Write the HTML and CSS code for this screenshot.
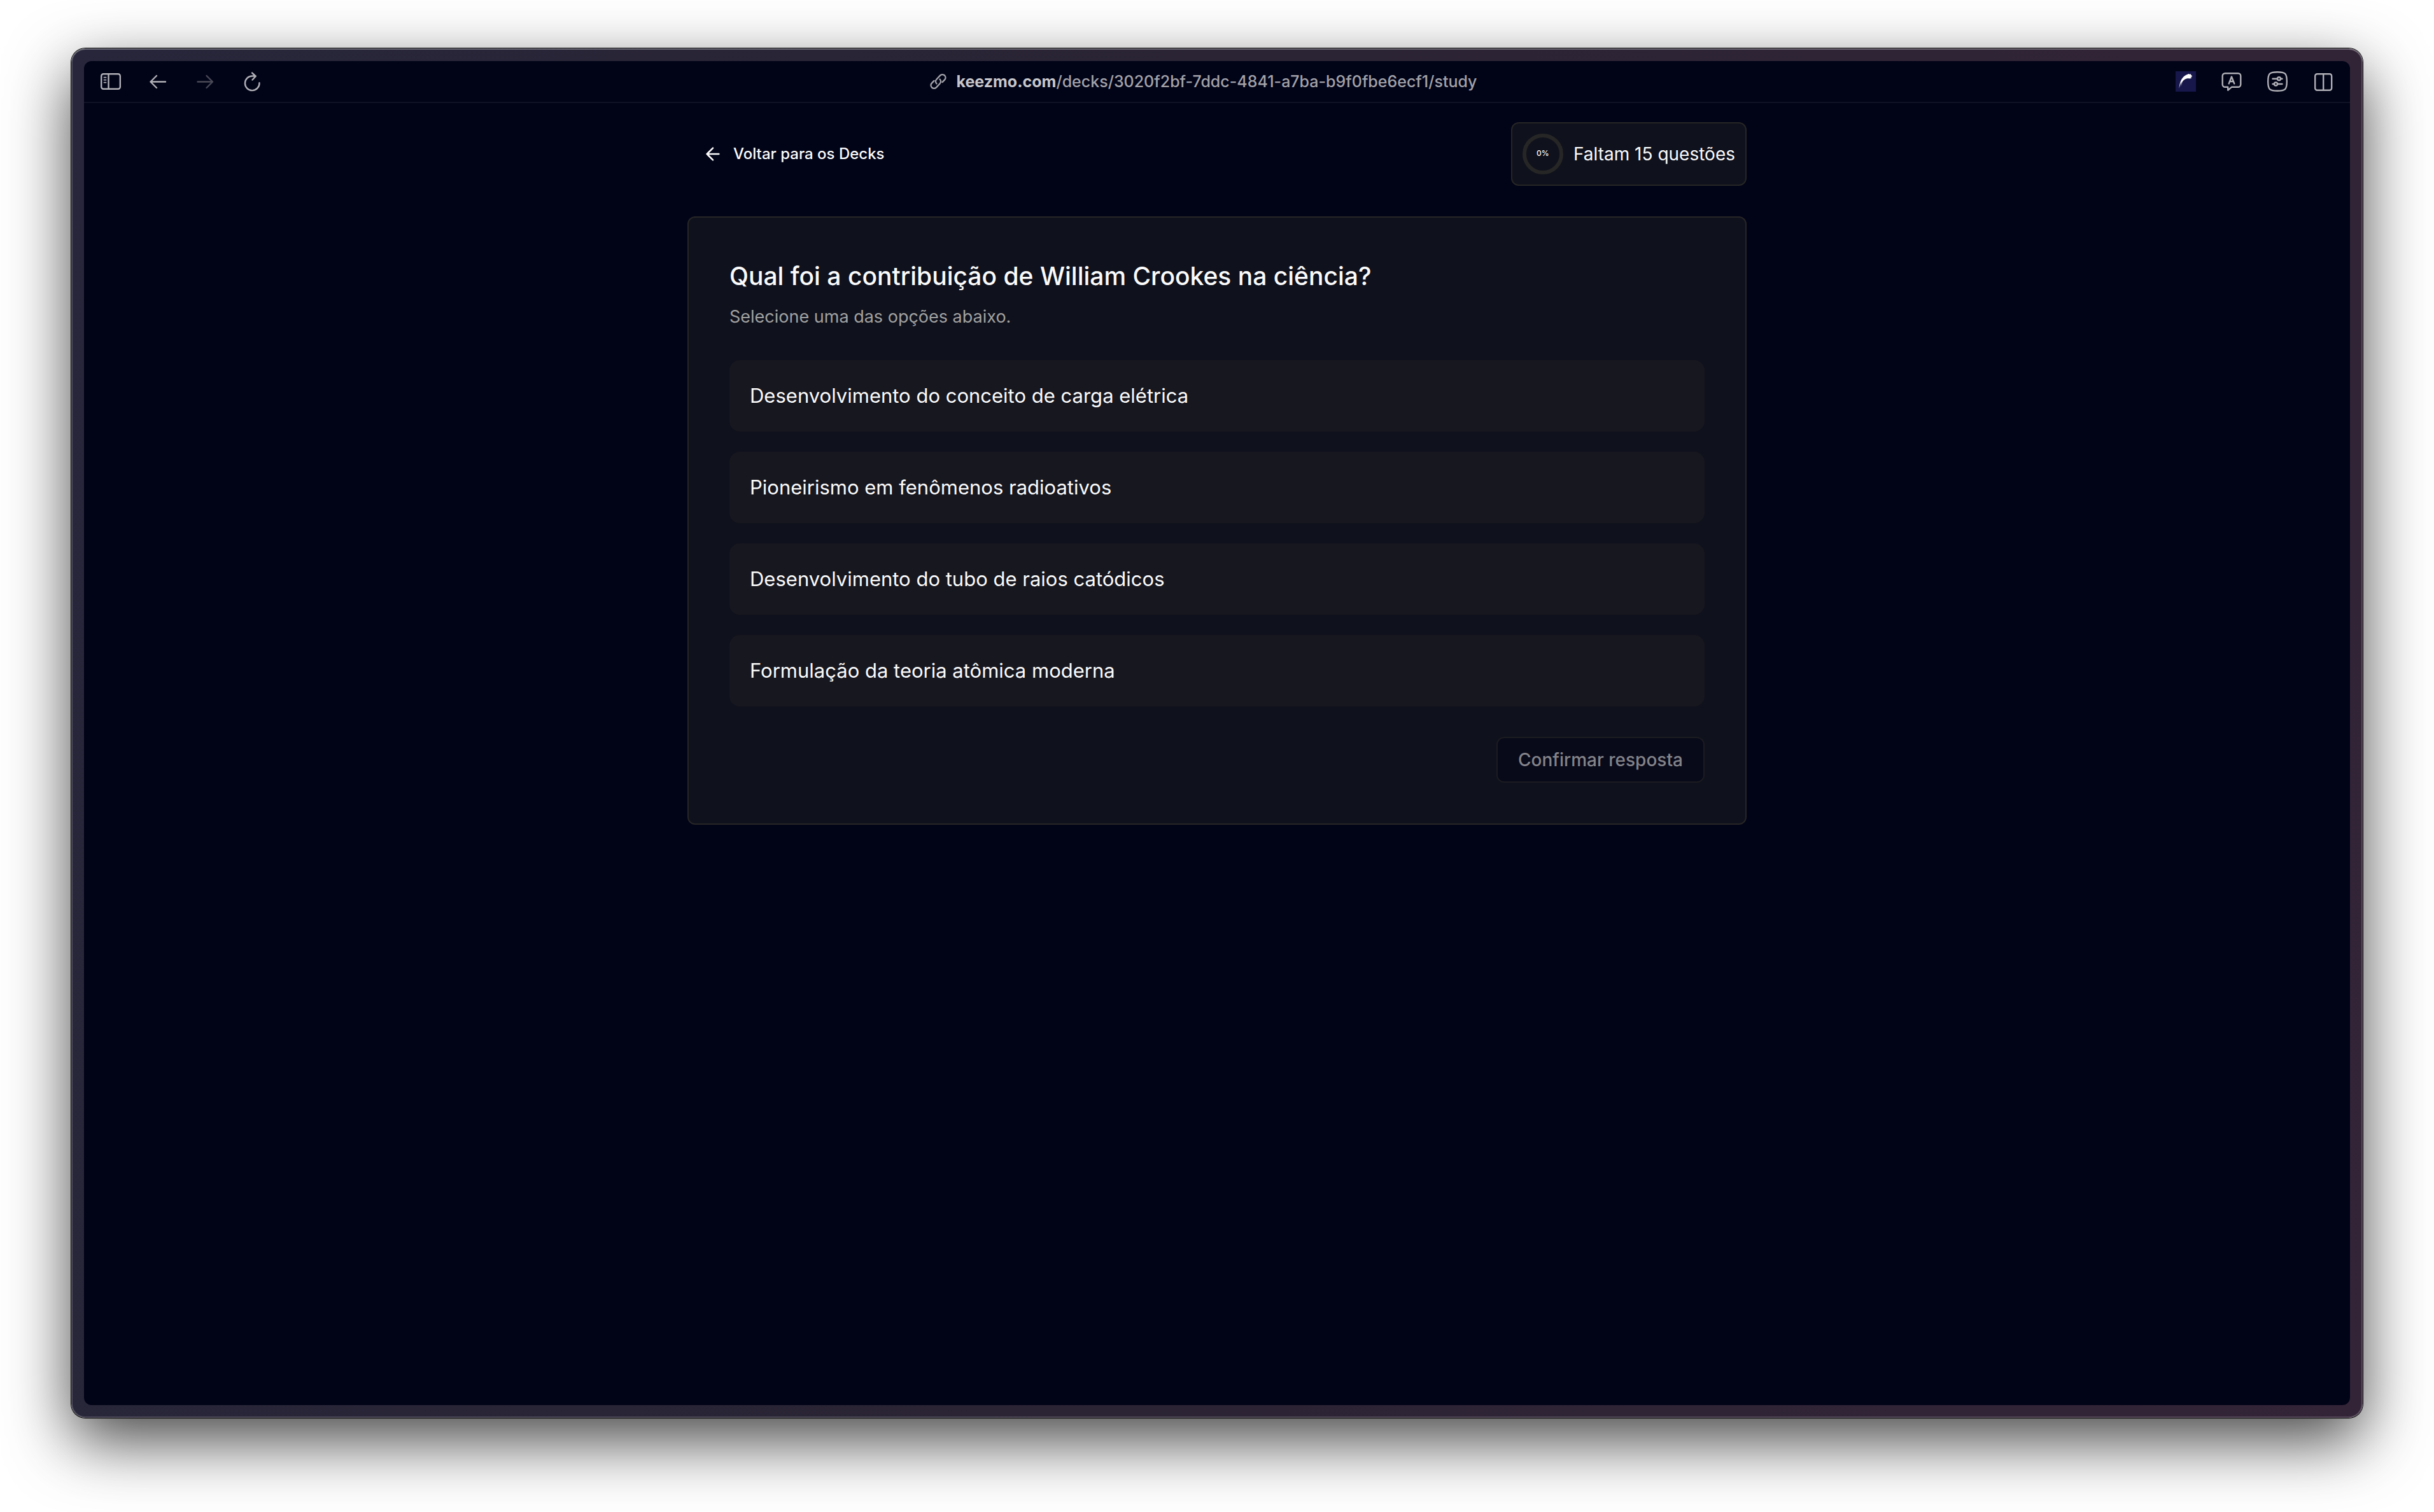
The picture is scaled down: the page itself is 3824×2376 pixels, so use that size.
FILE: index.html
```html
<!DOCTYPE html>
<html lang="pt-BR">
<head>
  <meta charset="utf-8">
  <meta name="viewport" content="width=device-width, initial-scale=1">
  <title>Keezmo – Estudo</title>
  <link rel="stylesheet" href="styles.css">
</head>
<body>
  <div class="window">
    <div class="viewport">
      <header class="toolbar">
        <nav class="tools tools-left" aria-label="Navegação">
          <button class="tool" type="button" aria-label="Barra lateral">
            <svg viewBox="0 0 32 32"><rect x="1.2" y="4.2" width="29.6" height="23.6" rx="3.2"/><path d="M12.5 4.5v23"/><path class="thin" d="M5.5 9.7h3M5.5 13.7h3M5.5 17.7h3"/></svg>
          </button>
          <button class="tool" type="button" aria-label="Voltar">
            <svg viewBox="0 0 32 32"><path d="M28 16.5H4.500M14 7l-9.500 9.500L14 26"/></svg>
          </button>
          <button class="tool" type="button" aria-label="Avançar" disabled>
            <svg viewBox="0 0 32 32"><path d="M4.500 16.500H28M18.500 7l9.500 9.500L18.500 26"/></svg>
          </button>
          <button class="tool" type="button" aria-label="Recarregar">
            <svg viewBox="0 0 32 32"><path d="M27.500 18.200a11.300 11.300 0 1 1-11.300-10.700h5.500M16 2.500l5.800 5.300-5.300 5.700"/></svg>
          </button>
        </nav>
        <div class="address">
          <svg class="link-icon" viewBox="0 0 28 28" aria-hidden="true"><path d="M11.500 17.500C9.500 15.500 9.600 12.500 11.500 10.500L17 4.700c2-2 5-2 7-.2 1.900 1.900 2 4.900.1 6.900l-3.600 3.700"/><path d="M16.500 10.500c2 2 1.900 5 0 7L11 23.300c-2 2-5 2-7 .2-1.900-1.900-2-4.900-.1-6.900l3.600-3.700"/></svg>
          <span class="url"><strong>keezmo.com</strong>/decks/3020f2bf-7ddc-4841-a7ba-b9f0fbe6ecf1/study</span>
        </div>
        <div class="tools tools-right">
          <button class="tool" type="button" aria-label="Extensão">
            <svg viewBox="0 0 32 32"><rect class="logo-bg" width="32" height="32"/><path class="logo-mark" d="M5.500 27C6.500 16 10.500 7.500 18.500 5l2-1 1.200.7 1.800-.4.800 1.500 1.400 1.200.2 1.500-2.600.6 1.800.9-.6.900-2.600.6c-5-.9-9.800 1.700-11.700 6.300-.9 2.400-1.300 4.300-1.300 6.200-.4-3 0-5.400 1-7.800C7.500 19.500 6.500 23 5.500 27z"/></svg>
          </button>
          <button class="tool" type="button" aria-label="Traduzir">
            <svg viewBox="0 0 32 32"><path d="M5.700 3.200h20.600a4 4 0 0 1 4 4v13.600a4 4 0 0 1-4 4H16l-5.800 5v-5H5.700a4 4 0 0 1-4-4V7.200a4 4 0 0 1 4-4z"/><path d="M11.700 19.500 16 8.500l4.300 11M13 16h6"/></svg>
          </button>
          <button class="tool" type="button" aria-label="Ajustes do site">
            <svg viewBox="0 0 32 32"><path d="M16 1.200c12.500 0 14.800 2.300 14.800 14.800S28.500 30.800 16 30.800 1.200 28.500 1.200 16 3.500 1.200 16 1.200z"/><path d="M8.500 11.800h7.200M21.300 11.800h2.200M8.500 20h2.200M16.300 20h7.200"/><circle cx="18.500" cy="11.800" r="2.500"/><circle cx="13.500" cy="20" r="2.500"/></svg>
          </button>
          <button class="tool" type="button" aria-label="Dividir tela">
            <svg viewBox="0 0 32 32"><rect x="3.200" y="4.200" width="26" height="25.600" rx="3.200"/><path d="M16.200 4.500v25"/></svg>
          </button>
        </div>
      </header>

      <main class="page">
        <div class="page-head">
          <a class="back" href="#decks">
            <svg class="back-icon" viewBox="0 0 24 24" aria-hidden="true"><path d="m12 19-7-7 7-7M19 12H5"/></svg>
            Voltar para os Decks
          </a>
          <div class="status">
            <div class="ring">0%</div>
            <span>Faltam 15 questões</span>
          </div>
        </div>

        <section class="card">
          <h1 class="question">Qual foi a contribuição de William Crookes na ciência?</h1>
          <p class="hint">Selecione uma das opções abaixo.</p>
          <div class="options">
            <button class="option" type="button">Desenvolvimento do conceito de carga elétrica</button>
            <button class="option" type="button">Pioneirismo em fenômenos radioativos</button>
            <button class="option" type="button">Desenvolvimento do tubo de raios catódicos</button>
            <button class="option" type="button">Formulação da teoria atômica moderna</button>
          </div>
          <button class="confirm" type="button" disabled>Confirmar resposta</button>
        </section>
      </main>
    </div>
  </div>
</body>
</html>
```
FILE: styles.css
```css
:root {
  --bg: #010317;
  --card: #0f111c;
  --line: #262626;
  --text: #fafafa;
  --chrome: #b0b0b6;
}

* {
  box-sizing: border-box;
}

body {
  display: flex;
  min-height: 100vh;
  margin: 0;
  padding: 76px 112px 148px;
  background: #fff;
  color: var(--text);
  font-family: Inter, "Liberation Sans", sans-serif;
}

button {
  margin: 0;
  font: inherit;
}

.window {
  display: flex;
  flex: 1;
  padding: 20px;
  border-radius: 22px;
  background: linear-gradient(100deg, #27263a, #2a2434 45%, #332437);
  box-shadow:
    inset 0 0 0 2px rgba(255, 255, 255, 0.2),
    inset 0 2px 0 rgba(255, 255, 255, 0.16),
    0 0 0 1px #000,
    0 36px 100px rgba(0, 0, 0, 0.73);
}

.viewport {
  display: flex;
  flex: 1;
  flex-direction: column;
  border-radius: 12px;
  background: var(--bg);
  overflow: hidden;
}

.toolbar {
  display: grid;
  grid-template-columns: 1fr auto 1fr;
  align-items: center;
  padding: 16px 26px;
  border-bottom: 2px solid #0f1124;
}

.tools {
  display: flex;
}

.tools-left {
  gap: 42px;
}

.tools-right {
  justify-content: flex-end;
  gap: 40px;
}

.tool {
  width: 32px;
  height: 32px;
  padding: 0;
  border: 0;
  background: none;
  color: var(--chrome);
}

.tool:disabled {
  color: #484856;
}

.tool svg {
  display: block;
}

.tool svg,
.link-icon,
.back-icon {
  fill: none;
  stroke: currentColor;
  stroke-width: 2.4;
  stroke-linecap: round;
  stroke-linejoin: round;
}

.tool .thin {
  stroke-width: 1.8;
}

.tool .logo-bg {
  fill: #17174c;
  stroke: none;
}

.tool .logo-mark {
  fill: #fff;
  stroke: none;
}

.address {
  display: flex;
  align-items: center;
  gap: 15px;
  padding-right: 44px;
  color: #a2a2a9;
}

.link-icon {
  width: 28px;
  height: 28px;
}

.url {
  font-size: 25px;
  font-weight: 500;
  line-height: 32px;
}

.url strong {
  color: #c6c6ca;
  font-weight: 700;
}

.page {
  width: 100%;
  max-width: 1664px;
  margin: 0 auto;
  padding: 30px 0;
}

.page-head {
  display: flex;
  align-items: center;
  justify-content: space-between;
  margin-bottom: 48px;
}

.back {
  display: flex;
  align-items: center;
  gap: 16px;
  padding: 16px 24px;
  color: inherit;
  font-size: 24px;
  font-weight: 500;
  line-height: 32px;
  text-decoration: none;
}

.back-icon {
  width: 32px;
  height: 32px;
  stroke-width: 2;
}

.status {
  display: flex;
  align-items: center;
  gap: 16px;
  padding: 16px;
  border: 2px solid var(--line);
  border-radius: 12px;
  background: var(--card);
  font-size: 28px;
  line-height: 40px;
}

.ring {
  width: 64px;
  height: 64px;
  border: 6px solid var(--line);
  border-radius: 50%;
  font-size: 12px;
  font-weight: 500;
  line-height: 50px;
  text-align: center;
}

.card {
  display: flex;
  flex-direction: column;
  padding: 64px;
  border: 2px solid var(--line);
  border-radius: 12px;
  background: var(--card);
}

.question {
  margin: 0 0 16px;
  font-size: 39px;
  font-weight: 500;
  line-height: 56px;
}

.hint {
  margin: 0 0 48px;
  color: #a1a1a1;
  font-size: 27px;
  line-height: 40px;
}

.options {
  display: grid;
  gap: 32px;
  margin-bottom: 48px;
}

.option {
  padding: 32px;
  border: 0;
  border-radius: 16px;
  background: #17171f;
  color: inherit;
  font-size: 31px;
  line-height: 48px;
  text-align: left;
}

.confirm {
  align-self: flex-end;
  padding: 14px 32px;
  border: 2px solid #1b1c21;
  border-radius: 12px;
  background: #080919;
  color: #838389;
  font-size: 28px;
  font-weight: 500;
  line-height: 40px;
}
```
